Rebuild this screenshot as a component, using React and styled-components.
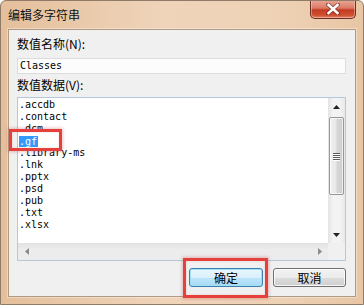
import React from "react";
import styled, { createGlobalStyle, css } from "styled-components";

const Global = createGlobalStyle`
  html, body { margin: 0; padding: 0; background: #ffffff; }
  * { box-sizing: border-box; }
`;

const cjk = `"Noto Sans CJK SC", "Noto Sans", sans-serif`;
const mono = `"DejaVu Sans Mono", "Liberation Mono", monospace`;

const Window = styled.div`
  width: 364px;
  height: 305px;
  border: 1px solid #8f7b68;
  border-radius: 6px 6px 0 0;
  background: linear-gradient(90deg, #e4bf9b 0%, #efd4ba 45%, #eed2b6 75%, #e8c6a4 100%);
  display: flex;
  flex-direction: column;
  font-family: ${cjk};
  overflow: hidden;
`;

const TitleBar = styled.div`
  height: 28px;
  display: flex;
  justify-content: space-between;
  align-items: flex-start;
  padding: 0 7px 0 7px;
`;

const Title = styled.div`
  font-size: 12px;
  line-height: 12px;
  margin-top: 8px;
  color: #111;
`;

const CloseButton = styled.div`
  width: 46px;
  height: 19px;
  margin-top: -1px;
  border: 1px solid #6a2e25;
  border-top: none;
  border-radius: 0 0 5px 5px;
  background: linear-gradient(180deg, #e9a898 0%, #dc7a65 45%, #c23a22 55%, #d0512f 85%, #e2846b 100%);
  box-shadow: inset 0 0 0 1px rgba(255, 220, 210, 0.45);
  display: flex;
  align-items: center;
  justify-content: center;
`;

const Client = styled.div`
  flex: 1;
  margin: 0 7px 7px 7px;
  border: 1px solid #b09a84;
  background: #f0f0f0;
  padding: 7px 9px 0 8px;
  display: flex;
  flex-direction: column;
  box-shadow: 0 0 0 1px rgba(255, 255, 255, 0.35);
`;

const Label = styled.div`
  font-size: 12px;
  line-height: 14px;
  height: 14px;
  color: #000;
  margin-top: ${(p) => p.$gap || 0}px;
`;

const TextField = styled.div`
  margin-top: 7px;
  height: 16px;
  border: 1px solid #dcdcdc;
  background: #fcfcfc;
  font-family: ${mono};
  font-size: 10px;
  line-height: 14px;
  padding-left: 2px;
  color: #000;
`;

const ListBox = styled.div`
  margin-top: 5px;
  height: 164px;
  border: 1px solid #b4c8da;
  background: #fff;
  display: flex;
  flex-direction: column;
`;

const ListArea = styled.div`
  flex: 1;
  display: flex;
  min-height: 0;
`;

const Items = styled.div`
  flex: 1;
  padding: 1px 0 0 1px;
  font-family: ${mono};
  font-size: 10px;
  color: #000;
`;

const Item = styled.div`
  height: 12px;
  line-height: 12px;
  white-space: nowrap;
`;

const Selected = styled.span`
  position: relative;
  display: inline-block;
  height: 11px;
  line-height: 11px;
  padding-right: 1px;
  background: #3399ff;
  color: #fff;
  margin-top: 1px;
`;

const Mark = styled.span`
  position: absolute;
  border: 3px solid #e5403c;
  box-shadow: 0 0 3px 1px rgba(200, 80, 80, 0.35), inset 0 0 2px rgba(200, 80, 80, 0.3);
  pointer-events: none;
  ${(p) => css`
    left: ${p.$l}px;
    top: ${p.$t}px;
    width: ${p.$w}px;
    height: ${p.$h}px;
  `}
`;

const VScroll = styled.div`
  width: 17px;
  display: flex;
  flex-direction: column;
  background: linear-gradient(90deg, #e3e3e3 0%, #f3f3f3 30%, #f3f3f3 70%, #e8e8e8 100%);
`;

const ArrowBox = styled.div`
  width: 17px;
  height: 17px;
  flex: none;
  display: flex;
  align-items: center;
  justify-content: center;
`;

const Track = styled.div`
  flex: 1;
  padding: 2px 1px 0 1px;
`;

const Thumb = styled.div`
  height: 78px;
  border: 1px solid #979797;
  border-radius: 2px;
  background: linear-gradient(90deg, #f2f2f2 0%, #e8e8e8 45%, #d6d6d6 55%, #cfcfcf 100%);
  box-shadow: inset 0 0 0 1px rgba(255, 255, 255, 0.7);
  display: flex;
  flex-direction: column;
  align-items: center;
  justify-content: center;
  gap: 1px;
`;

const Grip = styled.div`
  width: 7px;
  height: 1px;
  background: #5a5a5a;
  box-shadow: 0 1px 0 #fff;
`;

const HScrollRow = styled.div`
  height: 17px;
  display: flex;
`;

const HScroll = styled.div`
  flex: 1;
  display: flex;
  justify-content: space-between;
  background: linear-gradient(180deg, #e2e2e2 0%, #ececec 40%, #ececec 100%);
`;

const Corner = styled.div`
  width: 17px;
  background: #f0f0f0;
`;

const ButtonRow = styled.div`
  margin-top: 7px;
  display: flex;
  justify-content: flex-end;
  gap: 10px;
`;

const Button = styled.div`
  position: relative;
  width: ${(p) => p.$w}px;
  height: 19px;
  border-radius: 3px;
  font-size: 12px;
  line-height: 17px;
  text-align: center;
  color: #000;
  border: 1px solid ${(p) => (p.$default ? "#3c7fb1" : "#707070")};
  background: ${(p) =>
    p.$default
      ? "linear-gradient(180deg, #eaf6fd 0%, #d9f0fc 50%, #bee6fd 51%, #a7d9f5 100%)"
      : "linear-gradient(180deg, #f2f2f2 0%, #ebebeb 50%, #dddddd 51%, #cfcfcf 100%)"};
  box-shadow: inset 0 0 0 1px ${(p) => (p.$default ? "#9fe0f5" : "rgba(255,255,255,0.8)")};
`;

const UpArrow = ({ color = "#222" }) => (
  <svg width="7" height="4" viewBox="0 0 7 4">
    <path d="M3.5 0 L7 4 L0 4 Z" fill={color} />
  </svg>
);
const DownArrow = ({ color = "#222" }) => (
  <svg width="7" height="4" viewBox="0 0 7 4">
    <path d="M0 0 L7 0 L3.5 4 Z" fill={color} />
  </svg>
);
const LeftArrow = ({ color = "#8a8a8a" }) => (
  <svg width="4" height="7" viewBox="0 0 4 7">
    <path d="M4 0 L4 7 L0 3.5 Z" fill={color} />
  </svg>
);
const RightArrow = ({ color = "#8a8a8a" }) => (
  <svg width="4" height="7" viewBox="0 0 4 7">
    <path d="M0 0 L4 3.5 L0 7 Z" fill={color} />
  </svg>
);

const CloseX = () => (
  <svg width="14" height="12" viewBox="0 0 14 12">
    <path
      d="M2 1.5 L12 10.5 M12 1.5 L2 10.5"
      stroke="#5e2a22"
      strokeWidth="4.2"
      strokeLinecap="square"
      opacity="0.55"
    />
    <path
      d="M2.5 2 L11.5 10 M11.5 2 L2.5 10"
      stroke="#ffffff"
      strokeWidth="2.4"
      strokeLinecap="square"
    />
  </svg>
);

const values = [
  ".accdb",
  ".contact",
  ".dcm",
  ".gf",
  ".library-ms",
  ".lnk",
  ".pptx",
  ".psd",
  ".pub",
  ".txt",
  ".xlsx",
];

export default function App() {
  return (
    <>
      <Global />
      <Window>
        <TitleBar>
          <Title>编辑多字符串</Title>
          <CloseButton>
            <CloseX />
          </CloseButton>
        </TitleBar>
        <Client>
          <Label>数值名称(N):</Label>
          <TextField>Classes</TextField>
          <Label $gap={4}>数值数据(V):</Label>
          <ListBox>
            <ListArea>
              <Items>
                {values.map((v) =>
                  v === ".gf" ? (
                    <Item key={v}>
                      <Selected>
                        {v}
                        <Mark $l={-10} $t={-7} $w={53} $h={22} />
                      </Selected>
                    </Item>
                  ) : (
                    <Item key={v}>{v}</Item>
                  )
                )}
              </Items>
              <VScroll>
                <ArrowBox>
                  <UpArrow />
                </ArrowBox>
                <Track>
                  <Thumb>
                    <Grip />
                    <Grip />
                    <Grip />
                    <Grip />
                  </Thumb>
                </Track>
                <ArrowBox>
                  <DownArrow />
                </ArrowBox>
              </VScroll>
            </ListArea>
            <HScrollRow>
              <HScroll>
                <ArrowBox>
                  <LeftArrow />
                </ArrowBox>
                <ArrowBox>
                  <RightArrow />
                </ArrowBox>
              </HScroll>
              <Corner />
            </HScrollRow>
          </ListBox>
          <ButtonRow>
            <Button $w={74} $default>
              确定
              <Mark $l={-7} $t={-11} $w={85} $h={40} />
            </Button>
            <Button $w={73}>取消</Button>
          </ButtonRow>
        </Client>
      </Window>
    </>
  );
}
